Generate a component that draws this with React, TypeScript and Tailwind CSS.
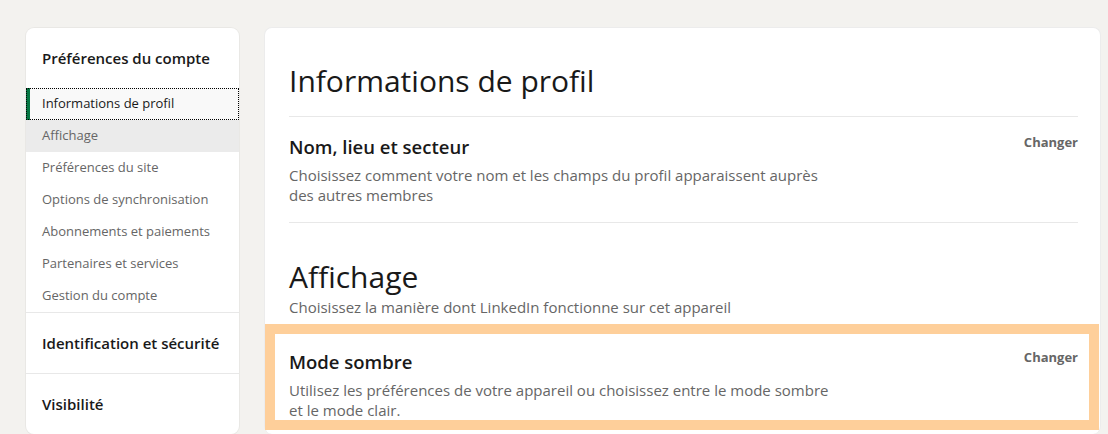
import React from 'react';

const sub = [
  'Informations de profil',
  'Affichage',
  'Préférences du site',
  'Options de synchronisation',
  'Abonnements et paiements',
  'Partenaires et services',
  'Gestion du compte',
];

function Sidebar() {
  return (
    <aside className="ml-[26px] mt-[28px] w-[213px] shrink-0 self-start rounded-lg bg-white shadow-[0_0_0_1px_rgba(0,0,0,0.04)]">
      <h2 className="px-4 pb-[18px] pt-[18px] text-[15px] font-semibold leading-[24px] text-[#191919]">
        Préférences du compte
      </h2>
      <ul>
        {sub.map((label, i) => {
          if (i === 0) {
            return (
              <li
                key={label}
                className="flex h-8 items-center border-l-4 border-[#057642] bg-[#f9f9f9] pl-3 text-[13px] text-[#191919] outline-1 outline-dotted outline-offset-[-1px] outline-black"
              >
                {label}
              </li>
            );
          }
          return (
            <li
              key={label}
              className={
                'flex h-8 items-center pl-4 text-[13px] text-[#666666] ' +
                (i === 1 ? 'bg-[#ebebeb]' : '')
              }
            >
              {label}
            </li>
          );
        })}
      </ul>
      <div className="flex h-[61px] items-center border-t border-[#e8e8e8] px-4 text-[15px] font-semibold text-[#191919]">
        Identification et sécurité
      </div>
      <div className="flex h-[61px] items-center border-t border-[#e8e8e8] px-4 text-[15px] font-semibold text-[#191919]">
        Visibilité
      </div>
    </aside>
  );
}

function Row({ title, lines }: { title: string; lines: string[] }) {
  return (
    <div className="flex items-start justify-between">
      <div>
        <h3 className="text-[18.5px] font-semibold leading-[24px] text-[#191919]">{title}</h3>
        <p className="mt-[6px] text-[15px] leading-[20px] text-[#666666]">
          {lines.map((l, i) => (
            <React.Fragment key={i}>
              {i > 0 && <br />}
              {l}
            </React.Fragment>
          ))}
        </p>
      </div>
      <button className="mt-[-3px] text-[13px] font-bold leading-[20px] text-[#666666]">Changer</button>
    </div>
  );
}

export default function App() {
  return (
    <div className="flex h-[434px] overflow-hidden bg-[#f3f2ef] font-['Open_Sans',sans-serif]">
      <Sidebar />
      <main className="ml-[25px] mr-[7px] mt-[27px] flex-1 rounded-lg border border-b-0 border-[#ececec] bg-white">
        <section className="pl-6 pr-[22px]">
          <h1 className="pb-[15px] pt-[33px] text-[30px] font-normal leading-[40px] text-[#191919]">
            Informations de profil
          </h1>
          <div className="border-t border-[#e8e8e8] pb-[17px] pt-[18px]">
            <Row
              title="Nom, lieu et secteur"
              lines={[
                'Choisissez comment votre nom et les champs du profil apparaissent auprès',
                'des autres membres',
              ]}
            />
          </div>
          <div className="border-t border-[#e8e8e8]" />
          <h1 className="pt-[34px] text-[30px] font-normal leading-[40px] text-[#191919]">Affichage</h1>
          <p className="mt-0 text-[15px] leading-[20px] text-[#666666]">
            Choisissez la manière dont LinkedIn fonctionne sur cet appareil
          </p>
        </section>
        <div className="mr-[1px] mt-[7px] border-[10px] border-[#fecf9a] pl-[14px] pr-[11px] pt-[16px]">
          <Row
            title="Mode sombre"
            lines={[
              'Utilisez les préférences de votre appareil ou choisissez entre le mode sombre',
              'et le mode clair.',
            ]}
          />
        </div>
      </main>
    </div>
  );
}
